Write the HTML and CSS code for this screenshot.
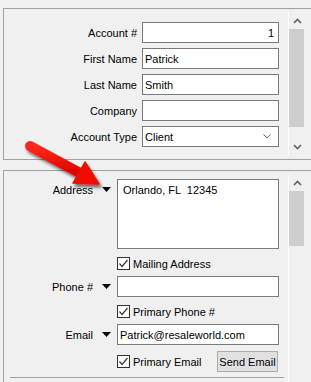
FILE: index.html
```html
<!DOCTYPE html>
<html>
<head>
<meta charset="utf-8">
<link rel="stylesheet" href="styles.css">
</head>
<body>
<div class="panel p1">
  <div class="content">
    <div class="form1">
      <div class="lbl">Account #</div><div class="field num">1</div>
      <div class="lbl">First Name</div><div class="field">Patrick</div>
      <div class="lbl">Last Name</div><div class="field">Smith</div>
      <div class="lbl">Company</div><div class="field"></div>
      <div class="lbl">Account Type</div>
      <div class="field combo"><span>Client</span>
        <svg class="combo-chev" width="8" height="5" viewBox="0 0 8 5"><polyline points="0.5,0.5 4,4 7.5,0.5" fill="none" stroke="#707070" stroke-width="1"/></svg>
      </div>
    </div>
  </div>
  <div class="scrollbar">
    <div class="sbtn up1"><svg width="9" height="6" viewBox="0 0 9 6"><polyline points="1,5 4.5,1.5 8,5" fill="none" stroke="#606060" stroke-width="1.6"/></svg></div>
    <div class="thumb t1"></div>
    <div class="track"></div>
    <div class="sbtn"><svg width="9" height="6" viewBox="0 0 9 6"><polyline points="1,1 4.5,4.5 8,1" fill="none" stroke="#606060" stroke-width="1.6"/></svg></div>
  </div>
</div>

<div class="panel p2">
  <div class="content">
    <div class="row addr">
      <div class="lcell top"><span>Address</span><svg class="tri" width="9" height="5" viewBox="0 0 9 5"><polygon points="0,0 9,0 4.5,5" fill="#000"/></svg></div>
      <div class="field area">Orlando, FL  12345</div>
    </div>
    <div class="row r-cb1">
      <div class="lcell"></div>
      <div class="cbline"><span class="cb"><svg width="11" height="11" viewBox="0 0 11 11"><polyline points="1.5,5.5 4,8.5 9.5,2" fill="none" stroke="#3a3a3a" stroke-width="1.2"/></svg></span><span>Mailing Address</span></div>
    </div>
    <div class="row r-in">
      <div class="lcell"><span>Phone #</span><svg class="tri" width="9" height="5" viewBox="0 0 9 5"><polygon points="0,0 9,0 4.5,5" fill="#000"/></svg></div>
      <div class="field wide"></div>
    </div>
    <div class="row r-cb">
      <div class="lcell"></div>
      <div class="cbline"><span class="cb"><svg width="11" height="11" viewBox="0 0 11 11"><polyline points="1.5,5.5 4,8.5 9.5,2" fill="none" stroke="#3a3a3a" stroke-width="1.2"/></svg></span><span>Primary Phone #</span></div>
    </div>
    <div class="row r-in">
      <div class="lcell"><span>Email</span><svg class="tri" width="9" height="5" viewBox="0 0 9 5"><polygon points="0,0 9,0 4.5,5" fill="#000"/></svg></div>
      <div class="field wide">Patrick@resaleworld.com</div>
    </div>
    <div class="row r-last">
      <div class="lcell"></div>
      <div class="cbline spread"><span class="cbwrap"><span class="cb"><svg width="11" height="11" viewBox="0 0 11 11"><polyline points="1.5,5.5 4,8.5 9.5,2" fill="none" stroke="#3a3a3a" stroke-width="1.2"/></svg></span><span>Primary Email</span></span><span class="btn">Send Email</span></div>
    </div>
    <div class="sep"></div>
  </div>
  <div class="scrollbar">
    <div class="sbtn up2"><svg width="9" height="6" viewBox="0 0 9 6"><polyline points="1,5 4.5,1.5 8,5" fill="none" stroke="#606060" stroke-width="1.6"/></svg></div>
    <div class="thumb t2"></div>
    <div class="track"></div>
  </div>
</div>

<svg class="arrow" width="311" height="382" viewBox="0 0 311 382">
  <defs>
    <filter id="sh" x="-20%" y="-20%" width="150%" height="160%">
      <feDropShadow dx="2" dy="3" stdDeviation="1.6" flood-color="#000" flood-opacity="0.55"/>
    </filter>
    <linearGradient id="rg" x1="0" y1="0" x2="0" y2="1">
      <stop offset="0" stop-color="#ff2a1a"/>
      <stop offset="1" stop-color="#e00000"/>
    </linearGradient>
  </defs>
  <g filter="url(#sh)">
    <line x1="30" y1="146" x2="80" y2="173" stroke="url(#rg)" stroke-width="10" stroke-linecap="round"/>
    <polygon points="99,184 73,183 85,162" fill="#ee0a00" stroke="#ee0a00" stroke-width="1.5" stroke-linejoin="round"/>
  </g>
</svg>
</body>
</html>
```

FILE: styles.css
```css
html, body {
  margin: 0;
  padding: 0;
}
body {
  background: #f0f0f0;
  font-family: "Liberation Sans", Arial, sans-serif;
  font-size: 11px;
  color: #000;
  width: 311px;
  height: 382px;
  overflow: hidden;
  position: relative;
}
.panel {
  margin-left: 3px;
  border: 1px solid #a0a0a0;
  border-right: none;
  display: flex;
  padding-right: 6px;
}
.p1 {
  margin-top: 8px;
  padding-top: 3px;
  padding-bottom: 4px;
  height: 143px;
}
.p2 {
  margin-top: 10px;
  padding-top: 4px;
  border-bottom: none;
  height: 207px;
  overflow: hidden;
}
.content {
  flex: 1;
  min-width: 0;
}
.p1 .content {
  padding-top: 10px;
}
.form1 {
  display: grid;
  grid-template-columns: 133px 137px;
  grid-auto-rows: 21px;
  column-gap: 5px;
  row-gap: 5px;
}
.lbl {
  display: flex;
  align-items: center;
  justify-content: flex-end;
  white-space: nowrap;
}
.field {
  box-sizing: border-box;
  height: 21px;
  background: #fff;
  border: 1px solid #7a7a7a;
  padding: 0 4px 0 2px;
  display: flex;
  align-items: center;
  white-space: pre;
}
.field.num {
  justify-content: flex-end;
}
.combo {
  justify-content: space-between;
  padding-right: 7px;
}
.combo-chev {
  display: block;
}
.scrollbar {
  width: 16px;
  border-left: 1px solid #fff;
  display: flex;
  flex-direction: column;
}
.sbtn {
  height: 17px;
  display: flex;
  align-items: center;
  justify-content: center;
  flex: none;
}
.sbtn svg {
  display: block;
}
.up2 {
  height: 16px;
}
.thumb {
  background: #cdcdcd;
  margin-right: 1px;
  flex: none;
}
.t1 {
  height: 98px;
}
.t2 {
  height: 55px;
}
.track {
  flex: 1;
}
.p2 .content {
  padding-top: 4px;
}
.row {
  display: flex;
  height: 21px;
}
.row.addr {
  height: 70px;
}
.r-cb1 {
  margin-top: 4px;
}
.r-in {
  margin-top: 2px;
}
.r-cb {
  margin-top: 4px;
}
.r-last {
  margin-top: 6px;
}
.lcell {
  width: 113px;
  flex: none;
  display: flex;
  align-items: center;
  justify-content: flex-end;
  height: 21px;
}
.lcell .tri {
  display: block;
  margin-left: 9px;
  margin-right: 6px;
}
.area {
  width: 162px;
  height: 70px;
  align-items: flex-start;
  padding: 3px 4px 0 5px;
  line-height: 14px;
}
.wide {
  width: 162px;
}
.cbline {
  display: flex;
  align-items: center;
  width: 162px;
  white-space: nowrap;
}
.cbline.spread {
  justify-content: space-between;
}
.cbwrap {
  display: flex;
  align-items: center;
}
.cb {
  box-sizing: border-box;
  width: 13px;
  height: 13px;
  border: 1px solid #333;
  background: #fff;
  margin-right: 3px;
  display: flex;
  align-items: center;
  justify-content: center;
}
.cb svg {
  display: block;
}
.btn {
  box-sizing: border-box;
  width: 61px;
  height: 21px;
  margin-right: 1px;
  background: #e1e1e1;
  border: 1px solid #adadad;
  display: flex;
  align-items: center;
  justify-content: center;
}
.sep {
  margin-top: 5px;
  margin-left: 6px;
  width: 274px;
  border-top: 1px solid #a0a0a0;
}
.arrow {
  position: absolute;
  left: 0;
  top: 0;
  pointer-events: none;
}
```
